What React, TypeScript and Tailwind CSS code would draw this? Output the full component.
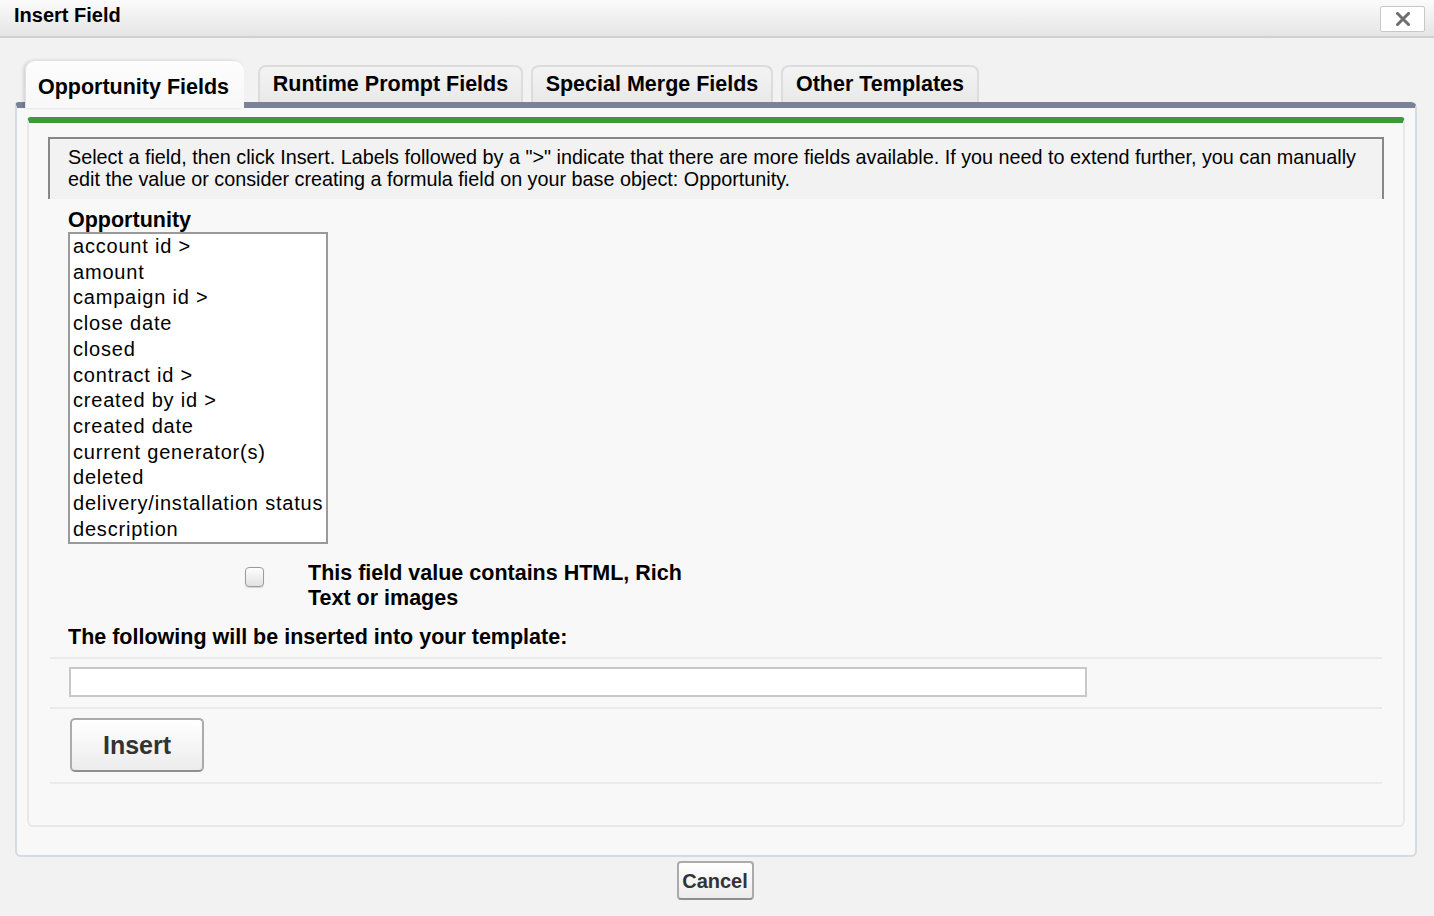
import React from "react";

const items = [
  "account id >",
  "amount",
  "campaign id >",
  "close date",
  "closed",
  "contract id >",
  "created by id >",
  "created date",
  "current generator(s)",
  "deleted",
  "delivery/installation status",
  "description",
];

function Tab({ label, w }: { label: string; w: string }) {
  return (
    <div
      className={`${w} h-[37px] flex items-center justify-center border-2 border-b-0 border-[#dcdcdc] rounded-t-[8px] bg-gradient-to-b from-[#f3f3f3] to-[#e9e9e9] text-[21.5px] font-bold text-black whitespace-nowrap`}
    >
      {label}
    </div>
  );
}

export default function App() {
  return (
    <div className="w-[1434px] h-[916px] bg-[#f2f2f2] overflow-hidden font-['Liberation_Sans',Arial,sans-serif] text-black">
      {/* Header */}
      <div className="h-[38px] border-b-2 border-[#d0d0d0] bg-gradient-to-b from-[#fbfbfb] to-[#e5e5e5] flex justify-between pl-[14px] pr-[9px]">
        <div className="text-[20px] font-bold leading-[24px] pt-[3px]">Insert Field</div>
        <div className="mt-[6px] w-[45px] h-[26px] border border-[#c8c8c8] bg-white rounded-[2px] flex items-center justify-center">
          <svg width="14" height="14" viewBox="0 0 14 14">
            <path d="M1.5 1.5 L12.5 12.5 M12.5 1.5 L1.5 12.5" stroke="#6e6e6e" strokeWidth="3" strokeLinecap="square" />
          </svg>
        </div>
      </div>

      <div className="pl-[15px] pr-[17px] pt-[22px]">
        {/* Tabs */}
        <div className="flex items-end h-[42px] pl-[10px]">
          <div className="relative z-10 w-[219px] h-[48px] -mb-[6px] rounded-t-[10px] border-l border-t border-[#e2e2e2] bg-gradient-to-b from-[#fdfdfd] to-[#f8f8f8] shadow-[-2px_0_3px_rgba(0,0,0,0.12)] flex justify-center pt-[14px] pr-[3px] text-[21.5px] font-bold leading-[24px] whitespace-nowrap">
            Opportunity Fields
          </div>
          <div className="ml-[14px]">
            <Tab label="Runtime Prompt Fields" w="w-[265px]" />
          </div>
          <div className="ml-[8px]">
            <Tab label="Special Merge Fields" w="w-[242px]" />
          </div>
          <div className="ml-[8px]">
            <Tab label="Other Templates" w="w-[198px]" />
          </div>
        </div>

        {/* Outer panel */}
        <div className="h-[755px] border-t-[6px] border-t-[#7a8299] border-x-2 border-b-2 border-x-[#d5dadf] border-b-[#d5dadf] rounded-tr-[6px] rounded-tl-[4px] rounded-b-[6px] bg-[#f8f8f8] px-[10px] pt-[9px]">
          {/* Inner panel */}
          <div className="h-[710px] border-t-[6px] border-t-[#3c9a3c] border-x-2 border-b-2 border-x-[#e8e8e8] border-b-[#e8e8e8] rounded-t-[4px] rounded-b-[6px] bg-[#f8f8f8] px-[19px] pt-[14px]">
            {/* Info */}
            <div className="border-2 border-b-0 border-[#888888] bg-[#f2f2f2] px-[18px] pt-[7px] pb-[9px] text-[19.8px] leading-[22px]">
              <div className="whitespace-nowrap">
                Select a field, then click Insert. Labels followed by a "&gt;" indicate that there are more fields available. If you need to extend further, you can manually
              </div>
              <div className="whitespace-nowrap">
                edit the value or consider creating a formula field on your base object: Opportunity.
              </div>
            </div>

            <div className="pl-[20px] pt-[9px]">
              <div className="text-[21.5px] font-bold leading-[24px]">Opportunity</div>
              <div className="w-[260px] border-2 border-[#9a9a9a] bg-white">
                {items.map((it) => (
                  <div key={it} className="pl-[3px] text-[20px] leading-[25.7px] tracking-[0.8px] whitespace-nowrap">
                    {it}
                  </div>
                ))}
              </div>

              <div className="flex mt-[17px]">
                <div className="ml-[177px] mt-[6px] w-[19px] h-[20px] rounded-[4px] border border-[#9b9b9b] bg-gradient-to-b from-[#fdfdfd] to-[#e2e2e2] shadow-[0_1px_1px_rgba(0,0,0,0.15)]" />
                <div className="ml-[44px] text-[21.5px] font-bold leading-[25px]">
                  This field value contains HTML, Rich
                  <br />
                  Text or images
                </div>
              </div>

              <div className="mt-[14px] text-[21.5px] font-bold leading-[25px] whitespace-nowrap">
                The following will be inserted into your template:
              </div>
            </div>

            <div className="mx-[2px] mt-[7px] h-[2px] bg-[#ebebeb]" />
            <div className="pt-[8px] pb-[10px] pl-[21px]">
              <div className="w-[1018px] h-[30px] border-2 border-[#c8c8c8] bg-white" />
            </div>
            <div className="mx-[2px] h-[2px] bg-[#ebebeb]" />
            <div className="pt-[9px] pb-[10px] pl-[22px]">
              <div className="w-[134px] h-[54px] rounded-[5px] border-2 border-[#ababab] border-b-[#8f8f8f] bg-gradient-to-b from-[#ffffff] to-[#ececec] flex items-center justify-center text-[25px] font-bold text-[#333333]">
                Insert
              </div>
            </div>
            <div className="mx-[2px] h-[2px] bg-[#ebebeb]" />
          </div>
        </div>

        {/* Cancel */}
        <div className="flex justify-center pt-[4px] pr-[2px]">
          <div className="w-[77px] h-[39px] rounded-[4px] border-2 border-[#ababab] border-b-[#8f8f8f] bg-gradient-to-b from-[#ffffff] to-[#ececec] flex items-center justify-center text-[20px] font-bold text-[#333333]">
            Cancel
          </div>
        </div>
      </div>
    </div>
  );
}
